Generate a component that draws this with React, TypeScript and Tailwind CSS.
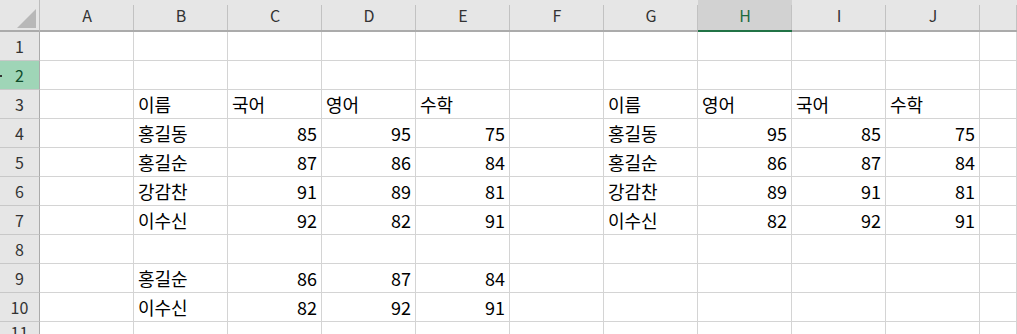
import React from "react";

const COLS = ["A", "B", "C", "D", "E", "F", "G", "H", "I", "J", "K"];

type Cell = string | number | null;
const rows: Record<number, Cell[]> = {
  3: [null, "이름", "국어", "영어", "수학", null, "이름", "영어", "국어", "수학", null],
  4: [null, "홍길동", 85, 95, 75, null, "홍길동", 95, 85, 75, null],
  5: [null, "홍길순", 87, 86, 84, null, "홍길순", 86, 87, 84, null],
  6: [null, "강감찬", 91, 89, 81, null, "강감찬", 89, 91, 81, null],
  7: [null, "이수신", 92, 82, 91, null, "이수신", 82, 92, 91, null],
  9: [null, "홍길순", 86, 87, 84, null, null, null, null, null, null],
  10: [null, "이수신", 82, 92, 91, null, null, null, null, null, null],
};

const font = { fontFamily: '"Noto Sans CJK KR", "Noto Sans", sans-serif' };

export default function App() {
  const rowNums = [1, 2, 3, 4, 5, 6, 7, 8, 9, 10, 11];
  return (
    <div
      className="grid w-[1017px] h-[334px] overflow-hidden bg-white grid-cols-[40px_repeat(10,94px)_1fr] grid-rows-[32px_repeat(10,29px)_1fr]"
      style={font}
    >
      {/* corner */}
      <div className="relative bg-[#e6e6e6] border-r border-r-[#bdbdbd] border-b-2 border-b-[#ababab]">
        <svg className="absolute left-[17px] top-[9px]" width="19" height="19" viewBox="0 0 19 19">
          <polygon points="19,0 19,19 0,19" fill="#b8b8b8" />
        </svg>
      </div>
      {COLS.map((c) => {
        const sel = c === "H";
        return (
          <div
            key={c}
            className={
              "relative flex items-center justify-center text-[16px] border-b-2 pb-[1px] " +
              (sel
                ? "bg-[#d2d2d2] border-b-[#217346] text-[#1d6b40]"
                : "bg-[#e6e6e6] border-b-[#ababab] text-[#333333]")
            }
          >
            {c !== "K" && <span className="leading-none">{c}</span>}
            <span className="absolute right-0 top-[5px] bottom-0 w-px bg-[#c2c2c2]" />
          </div>
        );
      })}
      {rowNums.map((r) => {
        const sel = r === 2;
        const data = rows[r] || [];
        return (
          <React.Fragment key={r}>
            <div
              className={
                "relative flex items-center justify-center text-[16px] border-b border-b-[#c8c8c8] border-r border-r-[#ababab] " +
                (sel ? "bg-[#9fd5b7] text-[#0f4c2b]" : "bg-[#e6e6e6] text-[#333333]") +
                (r === 11 ? " items-start pt-[2px]" : "")
              }
            >
              <span className="leading-none">{r}</span>
              {sel && <span className="absolute left-0 top-[14px] w-[2px] h-[2px] bg-[#333]" />}
            </div>
            {COLS.map((c, i) => {
              const v = data[i];
              const isNum = typeof v === "number";
              return (
                <div
                  key={c}
                  className={
                    "flex items-center border-r border-b border-[#d4d4d4] text-[18px] text-black leading-none " +
                    (isNum ? "justify-end pr-[4px]" : "justify-start pl-[4px]")
                  }
                >
                  {v !== null && v !== undefined ? <span>{v}</span> : null}
                </div>
              );
            })}
          </React.Fragment>
        );
      })}
    </div>
  );
}
